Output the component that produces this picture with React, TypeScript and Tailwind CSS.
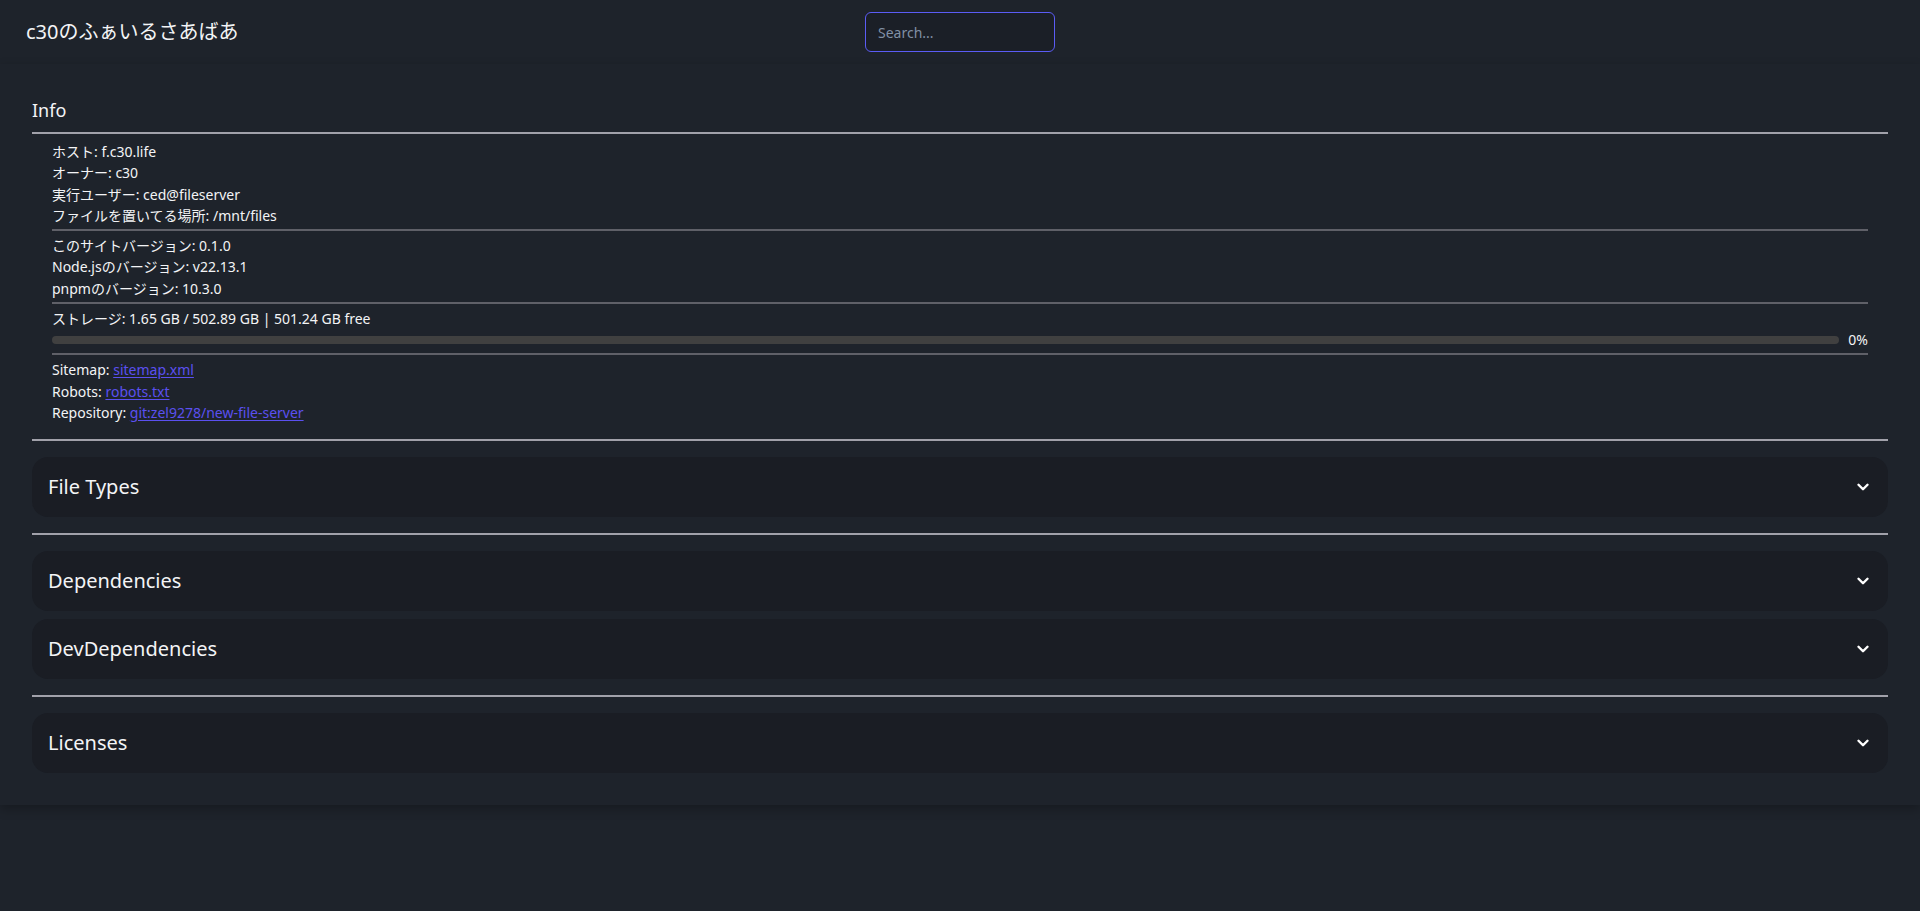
import React from "react";
import { ChevronDown } from "lucide-react";

const font = { fontFamily: '"Noto Sans", "Noto Sans CJK JP", sans-serif' };

const Divider: React.FC = () => <div className="h-[2px] bg-[#5f6068] mt-[3px] mb-1" />;

const SectionRule: React.FC = () => <div className="h-[2px] bg-[#a1a1aa] my-4" />;

const Row: React.FC<{ children: React.ReactNode }> = ({ children }) => (
  <div className="leading-[21.3px]">{children}</div>
);

const Link: React.FC<{ href: string; children: React.ReactNode }> = ({ href, children }) => (
  <a href={href} className="text-[#5b50f0] underline underline-offset-2">
    {children}
  </a>
);

const Collapsible: React.FC<{ title: string }> = ({ title }) => (
  <button className="w-full h-[60px] rounded-2xl bg-[#1a1d24] px-4 flex items-center justify-between text-left">
    <span className="text-xl text-gray-100">{title}</span>
    <ChevronDown size={18} strokeWidth={3.2} className="text-white" />
  </button>
);

export default function App() {
  const used = 1.65;
  const total = 502.89;
  const pct = Math.round((used / total) * 100);

  return (
    <div className="min-h-screen bg-[#1e232b] text-gray-100" style={font}>
      <header className="h-16 px-[26px] grid grid-cols-3 items-center">
        <h1 className="text-xl text-gray-100">c30のふぁいるさあばあ</h1>
        <div className="flex justify-center">
          <input
            type="text"
            placeholder="Search..."
            className="w-[190px] h-10 rounded-md border border-[#5b5cf5] bg-[#1b1f27] px-3 text-sm text-gray-100 placeholder:text-[#8190a5] outline-none"
          />
        </div>
        <div />
      </header>

      <main className="p-8 shadow-[0_4px_10px_rgba(0,0,0,0.25)]">
        <section>
          <h2 className="text-lg leading-7 pb-2 border-b-2 border-[#a1a1aa]">Info</h2>
          <div className="px-5 pt-[7px] text-sm">
            <Row>ホスト: f.c30.life</Row>
            <Row>オーナー: c30</Row>
            <Row>実行ユーザー: ced@fileserver</Row>
            <Row>ファイルを置いてる場所: /mnt/files</Row>
            <Divider />
            <Row>このサイトバージョン: 0.1.0</Row>
            <Row>Node.jsのバージョン: v22.13.1</Row>
            <Row>pnpmのバージョン: 10.3.0</Row>
            <Divider />
            <Row>ストレージ: 1.65 GB / 502.89 GB | 501.24 GB free</Row>
            <div className="flex items-center gap-[9px] leading-[21px]">
              <div className="flex-1 h-2 rounded-full bg-[#404040] overflow-hidden">
                <div className="h-full bg-[#5b5cf5]" style={{ width: `${pct}%` }} />
              </div>
              <span>{pct}%</span>
            </div>
            <Divider />
            <Row>
              Sitemap: <Link href="/sitemap.xml">sitemap.xml</Link>
            </Row>
            <Row>
              Robots: <Link href="/robots.txt">robots.txt</Link>
            </Row>
            <Row>
              Repository: <Link href="#">git:zel9278/new-file-server</Link>
            </Row>
          </div>
        </section>

        <SectionRule />
        <Collapsible title="File Types" />
        <SectionRule />
        <div className="flex flex-col gap-2">
          <Collapsible title="Dependencies" />
          <Collapsible title="DevDependencies" />
        </div>
        <SectionRule />
        <Collapsible title="Licenses" />
      </main>
    </div>
  );
}
